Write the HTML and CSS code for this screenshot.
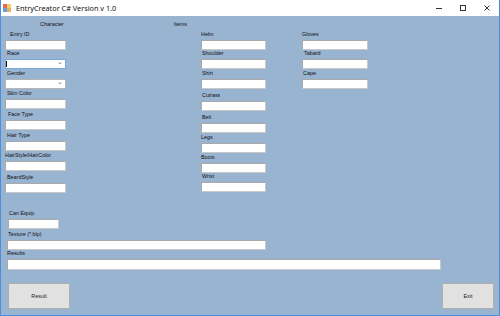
FILE: index.html
```html
<!DOCTYPE html>
<html>
<head>
<meta charset="utf-8">
<title>EntryCreator C# Version v 1.0</title>
<link rel="stylesheet" href="styles.css">
</head>
<body>
<div class="window">
  <div class="titlebar">
    <svg class="app-icon" width="8" height="8" viewBox="0 0 8 8">
      <rect x="0" y="0" width="8" height="8" fill="#e8e8e8"/>
      <rect x="0" y="0" width="4" height="4" fill="#e2513a"/>
      <rect x="4" y="0" width="4" height="4" fill="#f2c744"/>
      <rect x="0" y="4" width="4" height="4" fill="#4a8fdb"/>
      <rect x="4" y="4" width="4" height="4" fill="#f0a040"/>
    </svg>
    <span class="title">EntryCreator C# Version v 1.0</span>
    <div class="caption-buttons">
      <svg class="cap" width="24" height="16" viewBox="0 0 24 16"><line x1="9" y1="8.5" x2="15" y2="8.5" stroke="#333" stroke-width="1"/></svg>
      <svg class="cap" width="24" height="16" viewBox="0 0 24 16"><rect x="9.5" y="5.5" width="5" height="5" fill="none" stroke="#333" stroke-width="1"/></svg>
      <svg class="cap" width="24" height="16" viewBox="0 0 24 16"><path d="M9.5 5.5 L14.5 10.5 M14.5 5.5 L9.5 10.5" stroke="#333" stroke-width="1"/></svg>
    </div>
  </div>
  <div class="form">
    <div class="headings">
      <span class="heading h-char">Character</span>
      <span class="heading h-items">Items</span>
    </div>
    <div class="columns">
      <div class="col col1">
        <div class="field"><div class="label pl5">Entry ID</div><div class="box"></div></div>
        <div class="field up1"><div class="label pl2">Race</div><div class="box combo focused"><span class="caret"></span><span class="chev">&#8964;</span></div></div>
        <div class="field"><div class="label pl2">Gender</div><div class="box combo"><span class="chev">&#8964;</span></div></div>
        <div class="field"><div class="label pl2">Skin Color</div><div class="box"></div></div>
        <div class="field dn1"><div class="label pl3">Face Type</div><div class="box"></div></div>
        <div class="field dn1"><div class="label pl2">Hair Type</div><div class="box"></div></div>
        <div class="field"><div class="label">HairStyle/HairColor</div><div class="box"></div></div>
        <div class="field dn2"><div class="label pl2">BeardStyle</div><div class="box"></div></div>
      </div>
      <div class="col col2">
        <div class="field"><div class="label">Helm</div><div class="box"></div></div>
        <div class="field up1"><div class="label pl1">Shoulder</div><div class="box"></div></div>
        <div class="field"><div class="label pl1">Shirt</div><div class="box"></div></div>
        <div class="field dn2"><div class="label pl1">Cuirass</div><div class="box"></div></div>
        <div class="field dn2"><div class="label pl1">Belt</div><div class="box"></div></div>
        <div class="field"><div class="label">Legs</div><div class="box"></div></div>
        <div class="field"><div class="label">Boots</div><div class="box"></div></div>
        <div class="field up1"><div class="label pl1">Wrist</div><div class="box"></div></div>
      </div>
      <div class="col col3">
        <div class="field"><div class="label">Gloves</div><div class="box"></div></div>
        <div class="field up1"><div class="label pl2">Tabard</div><div class="box"></div></div>
        <div class="field"><div class="label pl1">Cape</div><div class="box"></div></div>
      </div>
    </div>
    <div class="bottom">
      <div class="field can-equip"><div class="label pl1">Can Equip</div><div class="box"></div></div>
      <div class="field texture"><div class="label pl1">Texture (*.blp)</div><div class="box"></div></div>
      <div class="field results up1"><div class="label">Results</div><div class="box tall"></div></div>
    </div>
    <div class="buttons">
      <button class="btn btn-result">Result</button>
      <button class="btn btn-exit">Exit</button>
    </div>
  </div>
</div>
</body>
</html>
```
FILE: styles.css
```css
* { box-sizing: border-box; }
html, body { margin: 0; padding: 0; background: #99b4d1; }
body { width: 500px; height: 316px; overflow: hidden; font-family: "Liberation Sans", Arial, sans-serif; }

.window {
  width: 500px;
  height: 316px;
  border: 1px solid #4a8fdb;
  border-top: none;
  background: #99b4d1;
  display: flex;
  flex-direction: column;
}

.titlebar {
  height: 16px;
  background: #ffffff;
  display: flex;
  align-items: center;
  flex: none;
}
.app-icon { margin-left: 2px; flex: none; opacity: 0.85; }
.title {
  margin-left: 5px;
  font-family: "Noto Sans", "Liberation Sans", sans-serif;
  font-size: 7.3px;
  color: #111;
}
.caption-buttons { margin-left: auto; display: flex; }
.cap { display: block; }

.form {
  flex: 1;
  display: flex;
  flex-direction: column;
  font-size: 5.4px;
  color: #111;
}

.headings {
  height: 14px;
  padding-top: 5px;
  display: flex;
  line-height: 7px;
}
.h-char { margin-left: 39px; }
.h-items { margin-left: 110px; }

.columns { display: flex; }
.col { display: flex; flex-direction: column; }
.col1 { margin-left: 4px; width: 61px; }
.col2 { margin-left: 135px; width: 65px; }
.col3 { margin-left: 36px; width: 66px; }

.field { display: flex; flex-direction: column; }
.label { height: 10px; line-height: 8.5px; white-space: nowrap; }
.box {
  height: 10px;
  background: #ffffff;
  border: 1px solid #a9a9a9;
  border-right-color: #c8c8c8;
  border-bottom-color: #c8c8c8;
  position: relative;
}
.box.tall { height: 11px; }
.combo { border-color: #b5b5b5; }
.combo.focused { border-color: #7aa6d8; }
.caret {
  position: absolute;
  left: 0px;
  top: 1px;
  width: 1px;
  height: 6px;
  background: #000;
}
.chev {
  position: absolute;
  right: 2px;
  top: -3px;
  font-size: 7px;
  line-height: 10px;
  color: #777;
}

.up1 { margin-top: -1px; }
.dn1 { margin-top: 1px; }
.dn2 { margin-top: 2px; }
.pl1 { padding-left: 1px; }
.pl2 { padding-left: 2px; }
.pl3 { padding-left: 3px; }
.pl5 { padding-left: 5px; }

.bottom { margin-top: 16px; display: flex; flex-direction: column; }
.can-equip { margin-left: 7px; width: 51px; }
.texture { margin-left: 6px; width: 259px; margin-top: 1px; }
.results { margin-left: 6px; width: 434px; }

.buttons {
  margin-top: 13px;
  display: flex;
  justify-content: space-between;
  padding-left: 7px;
  padding-right: 5px;
}
.btn {
  height: 26px;
  background: #e1e1e1;
  border: 1px solid #adadad;
  font-family: "Liberation Sans", Arial, sans-serif;
  font-size: 5.4px;
  color: #222;
  padding: 0;
}
.btn-result { width: 62px; }
.btn-exit { width: 52px; }
```
